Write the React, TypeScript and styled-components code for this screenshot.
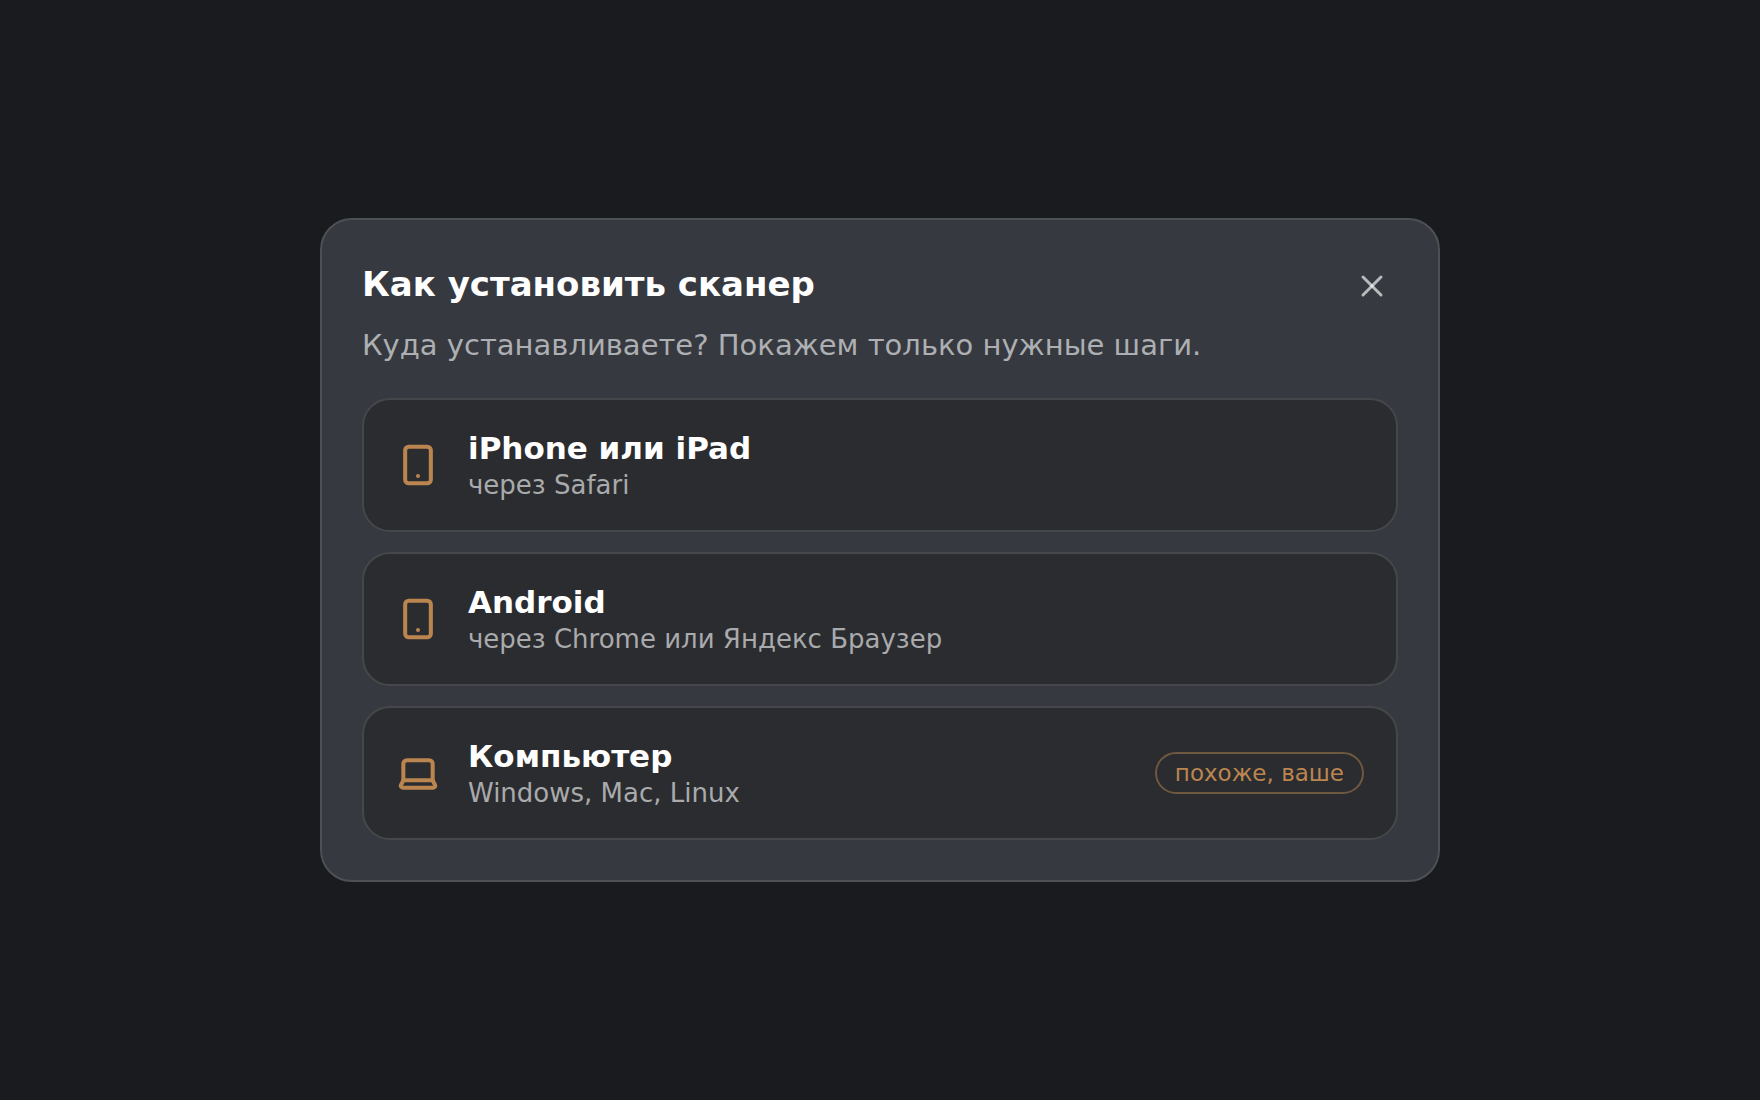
import React, { useState } from "react";
import styled, { createGlobalStyle } from "styled-components";
import { Laptop, Smartphone, X, type LucideIcon } from "lucide-react";

const GlobalStyle = createGlobalStyle`
  *, *::before, *::after { box-sizing: border-box; }
  body {
    margin: 0;
    background: #1a1b1f;
    color: #ffffff;
    font-family: "DejaVu Sans", sans-serif;
  }
`;

const Page = styled.main`
  min-height: 100vh;
  display: flex;
  align-items: center;
  justify-content: center;
  padding: 40px;
`;

const Dialog = styled.section`
  width: 100%;
  max-width: 1120px;
  padding: 40px;
  border: 2px solid #4e5154;
  border-radius: 32px;
  background: #36393f;
`;

const Header = styled.header`
  display: flex;
  align-items: center;
  justify-content: space-between;
  gap: 20px;
`;

const Title = styled.h1`
  margin: 0;
  padding-bottom: 4px;
  font-size: 34px;
  line-height: 40px;
  font-weight: 700;
`;

const CloseButton = styled.button`
  display: flex;
  padding: 8px;
  border: 0;
  background: none;
  color: rgba(255, 255, 255, 0.65);
  cursor: pointer;
`;

const Lead = styled.p`
  margin: 10px 0 30px;
  color: #adafb2;
  font-size: 29px;
  line-height: 46px;
`;

const Options = styled.div`
  display: flex;
  flex-direction: column;
  gap: 20px;
`;

const Option = styled.button`
  display: flex;
  align-items: center;
  gap: 28px;
  width: 100%;
  min-height: 134px;
  padding: 28px 32px;
  border: 2px solid #45474a;
  border-radius: 28px;
  background: #2b2c2f;
  color: inherit;
  font: inherit;
  text-align: left;
  cursor: pointer;

  > svg {
    flex: none;
    color: #bb8550;
  }
`;

const OptionText = styled.span`
  display: flex;
  flex: 1;
  flex-direction: column;
  gap: 4px;
`;

const OptionName = styled.span`
  font-size: 31px;
  line-height: 36px;
  font-weight: 700;
`;

const OptionHint = styled.span`
  color: #a9aaac;
  font-size: 26px;
  line-height: 30px;
`;

const Badge = styled.span`
  padding: 6px 18px;
  border: 2px solid #6e5840;
  border-radius: 21px;
  color: #bb8550;
  font-size: 23px;
  line-height: 26px;
  white-space: nowrap;
`;

type Platform = {
  name: string;
  hint: string;
  icon: LucideIcon;
  suggested?: boolean;
};

const platforms: Platform[] = [
  { name: "iPhone или iPad", hint: "через Safari", icon: Smartphone },
  { name: "Android", hint: "через Chrome или Яндекс Браузер", icon: Smartphone },
  { name: "Компьютер", hint: "Windows, Mac, Linux", icon: Laptop, suggested: true },
];

export default function App() {
  const [open, setOpen] = useState(true);

  return (
    <>
      <GlobalStyle />
      <Page>
        {open && (
          <Dialog role="dialog" aria-labelledby="install-title">
            <Header>
              <Title id="install-title">Как установить сканер</Title>
              <CloseButton type="button" aria-label="Закрыть" onClick={() => setOpen(false)}>
                <X size={36} />
              </CloseButton>
            </Header>
            <Lead>Куда устанавливаете? Покажем только нужные шаги.</Lead>
            <Options>
              {platforms.map(({ name, hint, icon: Icon, suggested }) => (
                <Option type="button" key={name}>
                  <Icon size={44} strokeWidth={2.2} />
                  <OptionText>
                    <OptionName>{name}</OptionName>
                    <OptionHint>{hint}</OptionHint>
                  </OptionText>
                  {suggested && <Badge>похоже, ваше</Badge>}
                </Option>
              ))}
            </Options>
          </Dialog>
        )}
      </Page>
    </>
  );
}
